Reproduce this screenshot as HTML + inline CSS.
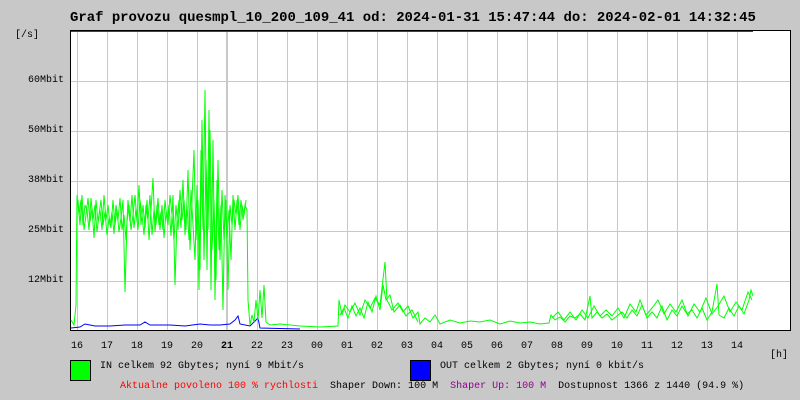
<!DOCTYPE html>
<html><head><meta charset="utf-8"><style>
body{margin:0;background:#c8c8c8;width:800px;height:400px;overflow:hidden;position:relative;font-family:"Liberation Mono",monospace;font-size:10px;color:#000}
.t{position:absolute;white-space:pre}
.x{position:absolute;top:341px;display:flex}
.x span{width:30px}
</style></head><body>
<div class="t" style="left:70px;top:10px;font-weight:bold;font-size:13.95px">Graf provozu quesmpl_10_200_109_41 od: 2024-01-31 15:47:44 do: 2024-02-01 14:32:45</div>
<div class="t" style="left:15px;top:30px">[/s]</div>
<div class="t" style="left:28px;top:75px">60Mbit</div>
<div class="t" style="left:28px;top:125px">50Mbit</div>
<div class="t" style="left:28px;top:175px">38Mbit</div>
<div class="t" style="left:28px;top:225px">25Mbit</div>
<div class="t" style="left:28px;top:275px">12Mbit</div>
<svg style="position:absolute;left:0;top:0" width="800" height="400">
<rect x="70.5" y="30.5" width="720" height="300" fill="#fff" stroke="#000"/>
<g stroke="#c8c8c8" stroke-width="1">
<path d="M77.5 31V330M107.5 31V330M137.5 31V330M167.5 31V330M197.5 31V330M257.5 31V330M287.5 31V330M317.5 31V330M347.5 31V330M377.5 31V330M407.5 31V330M437.5 31V330M467.5 31V330M497.5 31V330M527.5 31V330M557.5 31V330M587.5 31V330M617.5 31V330M647.5 31V330M677.5 31V330M707.5 31V330M737.5 31V330"/>
<path d="M71 81.5H790M71 131.5H790M71 181.5H790M71 231.5H790M71 281.5H790"/>
<path d="M227 31V330" stroke-width="2"/>
</g>
<path d="M71 31.5H753" stroke="#e00000"/>
<path d="M71 330.5H790" stroke="#000"/>
<polyline fill="none" stroke="#0000ff" points="71,328 80,327 85,324 95,326 110,326 125,325 140,325 145,322 150,325 170,325 185,326 200,324 210,325 220,325 230,324 235,320 238,316 240,324 250,326 258,318 260,328 300,329"/>
<g fill="none" stroke="#00ff00">
<polyline points="71,320 74,325 76,305 77,195 79,215 81,200 83,225 85,205 87,210 89,230 91,198 93,220 95,205 97,232 99,215 101,200 103,225 105,212 107,235 109,218 111,228 113,200 115,225 117,210 119,232 121,218 123,200 125,292 127,222 129,205 131,230 133,215 135,195 137,222 139,185 141,225 143,205 145,228 147,200 149,240 151,210 153,178 155,232 157,205 159,225 161,212 163,230 165,200 167,220 169,205 171,236 173,195 175,285 177,220 179,200 181,228 183,180 185,235 187,205 189,240 191,190 193,225 195,260 197,185 199,290 201,150 203,230 205,90 207,270 209,110 211,290 213,140 215,300 217,180 219,250 221,205 223,310 225,195 227,238 229,210 231,260 233,195 235,230 237,200 239,225 241,200 243,220 245,205 247,210 248,300 250,325 252,315 254,322 256,300 258,320 260,290 262,318 264,285 266,322 270,325 280,324 300,326 320,327 338,326 339,300 342,315 345,305 350,312 355,303 360,315 365,300 370,308 375,298 380,305 385,262 387,300 392,310 398,303 403,312 408,306 413,318 418,312 420,324 425,318 430,322 435,315 440,324 450,320 460,323 470,321 480,322 490,320 500,324 510,321 520,323 530,322 540,324 549,323 551,315 555,320 560,317 565,322 570,316 575,318 580,314 585,320 590,296 592,318 597,312 602,318 607,314 612,320 617,316 622,312 627,318 632,310 637,316 642,305 647,318 652,312 657,318 662,306 667,320 672,310 677,316 682,306 687,314 692,310 697,318 702,308 707,320 712,312 717,284 719,315 724,318 729,308 734,316 739,306 744,314 749,300 751,290 753,296"/>
<polyline points="78,200 80,225 82,195 84,230 86,215 88,198 90,222 92,208 94,238 96,200 98,222 100,210 102,230 104,195 106,220 108,205 110,225 112,212 114,234 116,205 118,220 120,198 122,230 124,215 126,240 128,200 130,222 132,195 134,228 136,208 138,230 140,200 142,215 144,235 146,205 148,220 150,195 152,235 154,210 156,225 158,198 160,230 162,205 164,238 166,212 168,225 170,195 172,215 174,240 176,205 178,230 180,190 182,220 184,200 186,230 188,170 190,250 192,200 194,150 196,240 198,200 200,270 202,120 204,260 206,160 208,230 210,130 212,250 214,200 216,280 218,160 220,260 222,190 224,240 226,200 228,290 230,205 232,225 234,200 236,215 238,195 240,230 242,205 244,215 246,200"/>
<polyline points="340,315 344,308 348,318 352,306 356,316 360,308 364,318 368,302 372,312 376,296 380,310 383,285 386,300 390,295 394,312 400,305 406,316 412,310 418,322"/>
<polyline points="552,318 558,312 564,320 570,312 576,320 582,310 588,318 594,306 600,316 606,310 612,316 618,308 624,318 630,304 636,312 640,300 646,315 652,308 658,300 664,314 670,304 676,312 682,300 688,316 694,304 700,312 706,298 712,314 718,306 724,296 730,312 736,302 742,310 748,292 752,300"/>
</g>
<rect x="70.5" y="360.5" width="20" height="20" fill="#00ff00" stroke="#000"/>
<rect x="410.5" y="360.5" width="20" height="20" fill="#0000ff" stroke="#000"/>
</svg>
<div class="x" style="left:71px"><span>16</span><span>17</span><span>18</span><span>19</span><span>20</span><span><b>21</b></span><span>22</span><span>23</span><span>00</span><span>01</span><span>02</span><span>03</span><span>04</span><span>05</span><span>06</span><span>07</span><span>08</span><span>09</span><span>10</span><span>11</span><span>12</span><span>13</span><span>14</span></div>
<div class="t" style="left:770px;top:350px">[h]</div>
<div class="t" style="left:100px;top:361px">IN celkem 92 Gbytes; nyní 9 Mbit/s</div>
<div class="t" style="left:440px;top:361px">OUT celkem 2 Gbytes; nyní 0 kbit/s</div>
<div class="t" style="left:120px;top:381px"><span style="color:#f00">Aktualne povoleno 100 % rychlosti</span>  Shaper Down: 100 M  <span style="color:#900090">Shaper Up: 100 M</span>  Dostupnost 1366 z 1440 (94.9 %)</div>
</body></html>
